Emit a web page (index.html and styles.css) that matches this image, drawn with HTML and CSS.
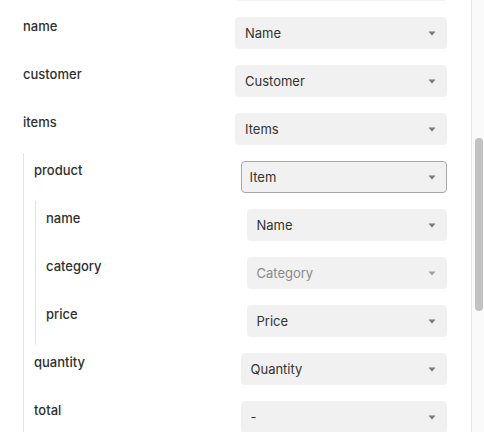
FILE: index.html
```html
<!DOCTYPE html>
<html>
<head>
<meta charset="utf-8">
<link rel="stylesheet" href="styles.css">
</head>
<body>
<div class="app">
  <div class="panel">
    <div class="list">
      <div class="row"><div class="label"></div><div class="select"><span></span><svg class="caret" width="8" height="5" viewBox="0 0 8 5"><path d="M0.5 0.5h7l-3.5 4z"/></svg></div></div>
      <div class="row"><div class="label">name</div><div class="select"><span>Name</span><svg class="caret" width="8" height="5" viewBox="0 0 8 5"><path d="M0.5 0.5h7l-3.5 4z"/></svg></div></div>
      <div class="row"><div class="label">customer</div><div class="select"><span>Customer</span><svg class="caret" width="8" height="5" viewBox="0 0 8 5"><path d="M0.5 0.5h7l-3.5 4z"/></svg></div></div>
      <div class="row"><div class="label">items</div><div class="select"><span>Items</span><svg class="caret" width="8" height="5" viewBox="0 0 8 5"><path d="M0.5 0.5h7l-3.5 4z"/></svg></div></div>
      <div class="nested">
        <div class="row"><div class="label">product</div><div class="select focused"><span>Item</span><svg class="caret" width="8" height="5" viewBox="0 0 8 5"><path d="M0.5 0.5h7l-3.5 4z"/></svg></div></div>
        <div class="nested">
          <div class="row"><div class="label">name</div><div class="select"><span>Name</span><svg class="caret" width="8" height="5" viewBox="0 0 8 5"><path d="M0.5 0.5h7l-3.5 4z"/></svg></div></div>
          <div class="row"><div class="label">category</div><div class="select muted"><span>Category</span><svg class="caret" width="8" height="5" viewBox="0 0 8 5"><path d="M0.5 0.5h7l-3.5 4z"/></svg></div></div>
          <div class="row"><div class="label">price</div><div class="select"><span>Price</span><svg class="caret" width="8" height="5" viewBox="0 0 8 5"><path d="M0.5 0.5h7l-3.5 4z"/></svg></div></div>
        </div>
        <div class="row"><div class="label">quantity</div><div class="select"><span>Quantity</span><svg class="caret" width="8" height="5" viewBox="0 0 8 5"><path d="M0.5 0.5h7l-3.5 4z"/></svg></div></div>
        <div class="row"><div class="label">total</div><div class="select"><span>-</span><svg class="caret" width="8" height="5" viewBox="0 0 8 5"><path d="M0.5 0.5h7l-3.5 4z"/></svg></div></div>
      </div>
    </div>
  </div>
  <div class="scrollbar"><div class="thumb"></div></div>
</div>
</body>
</html>
```
FILE: styles.css
```css
html, body {
  margin: 0;
  padding: 0;
  background: #ffffff;
}
body {
  font-family: Inter, "Noto Sans", sans-serif;
  font-size: 13px;
  color: #333333;
}
.app {
  display: flex;
  height: 432px;
  overflow: hidden;
}
.panel {
  flex: 1;
  overflow: hidden;
  padding: 0 24px 0 23px;
}
.list {
  margin-top: -39px;
}
.row {
  display: grid;
  grid-template-columns: 1fr 1fr;
  align-items: start;
  padding: 8px 0;
}
.label {
  font-weight: 500;
  line-height: 16px;
  padding-top: 1px;
  color: #2f2f2f;
}
.select {
  height: 32px;
  box-sizing: border-box;
  display: flex;
  align-items: center;
  justify-content: space-between;
  padding: 0 11px 0 10px;
  background: #f1f1f1;
  border-radius: 4px;
  line-height: 32px;
  color: #333333;
}
.select.focused {
  border: 1.5px solid #a8a8a8;
  padding-left: 8px;
  padding-right: 10px;
}
.select.muted {
  color: #8a8a8a;
}
.caret {
  fill: #777777;
  flex: none;
}
.select.muted .caret {
  fill: #a0a0a0;
}
.nested {
  border-left: 1px solid #e2e2e2;
  padding-left: 10px;
}
.nested .nested {
  margin-left: 1px;
}
.scrollbar {
  width: 13px;
  flex: none;
  border-left: 1px solid #e6e6e6;
  background: #fafafa;
  padding: 138px 0 0 3px;
  box-sizing: border-box;
}
.thumb {
  width: 8px;
  height: 173px;
  border-radius: 4px;
  background: #c2c2c2;
}
```
